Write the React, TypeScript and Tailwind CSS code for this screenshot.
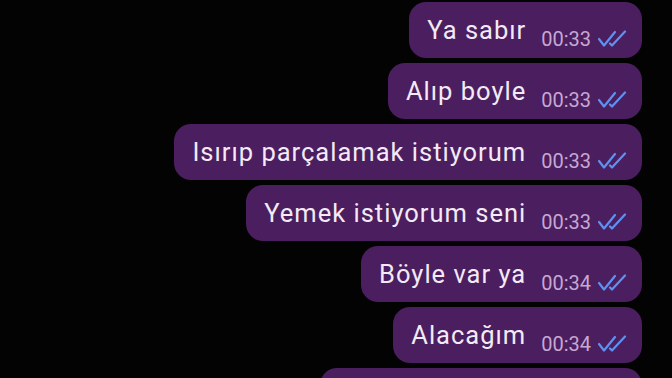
import React from "react";

const Ticks = () => (
  <svg width="30" height="18" viewBox="0 0 30 18" fill="none" className="ml-[6px] mt-[28px] shrink-0">
    <path d="M2 9 L7 15.5 L18 2" stroke="#5d92f2" strokeWidth="2.2" strokeLinecap="round" strokeLinejoin="round" />
    <path d="M13 13.5 L15 15.5 L28 1.5" stroke="#5d92f2" strokeWidth="2.2" strokeLinecap="round" strokeLinejoin="round" />
  </svg>
);

const msgs = [
  { t: "Ya sabır", time: "00:33" },
  { t: "Alıp boyle", time: "00:33" },
  { t: "Isırıp parçalamak istiyorum", time: "00:33" },
  { t: "Yemek istiyorum seni", time: "00:33" },
  { t: "Böyle var ya", time: "00:34" },
  { t: "Alacağım", time: "00:34" },
];

export default function App() {
  return (
    <div
      className="w-[672px] h-[378px] overflow-hidden bg-[#030303] flex flex-col items-end pr-[30px] pt-[2px] gap-[5px]"
      style={{ fontFamily: "Roboto, 'Noto Sans', sans-serif" }}
    >
      {msgs.map((m, i) => (
        <div
          key={i}
          className="shrink-0 h-[56px] rounded-[17px] bg-[#4b1e5f] flex items-start pl-[18px] pr-[15px]"
        >
          <span className="mt-[13px] text-[25.5px] leading-[30px] tracking-[1px] text-[#f3eaf5] whitespace-nowrap">
            {m.t}
          </span>
          <span className="ml-[15px] mt-[25px] text-[20px] leading-[24px] text-[#c6a8d3] whitespace-nowrap">
            {m.time}
          </span>
          <Ticks />
        </div>
      ))}
      <div className="shrink-0 h-[56px] w-[322px] rounded-[17px] bg-[#4b1e5f]" />
    </div>
  );
}
